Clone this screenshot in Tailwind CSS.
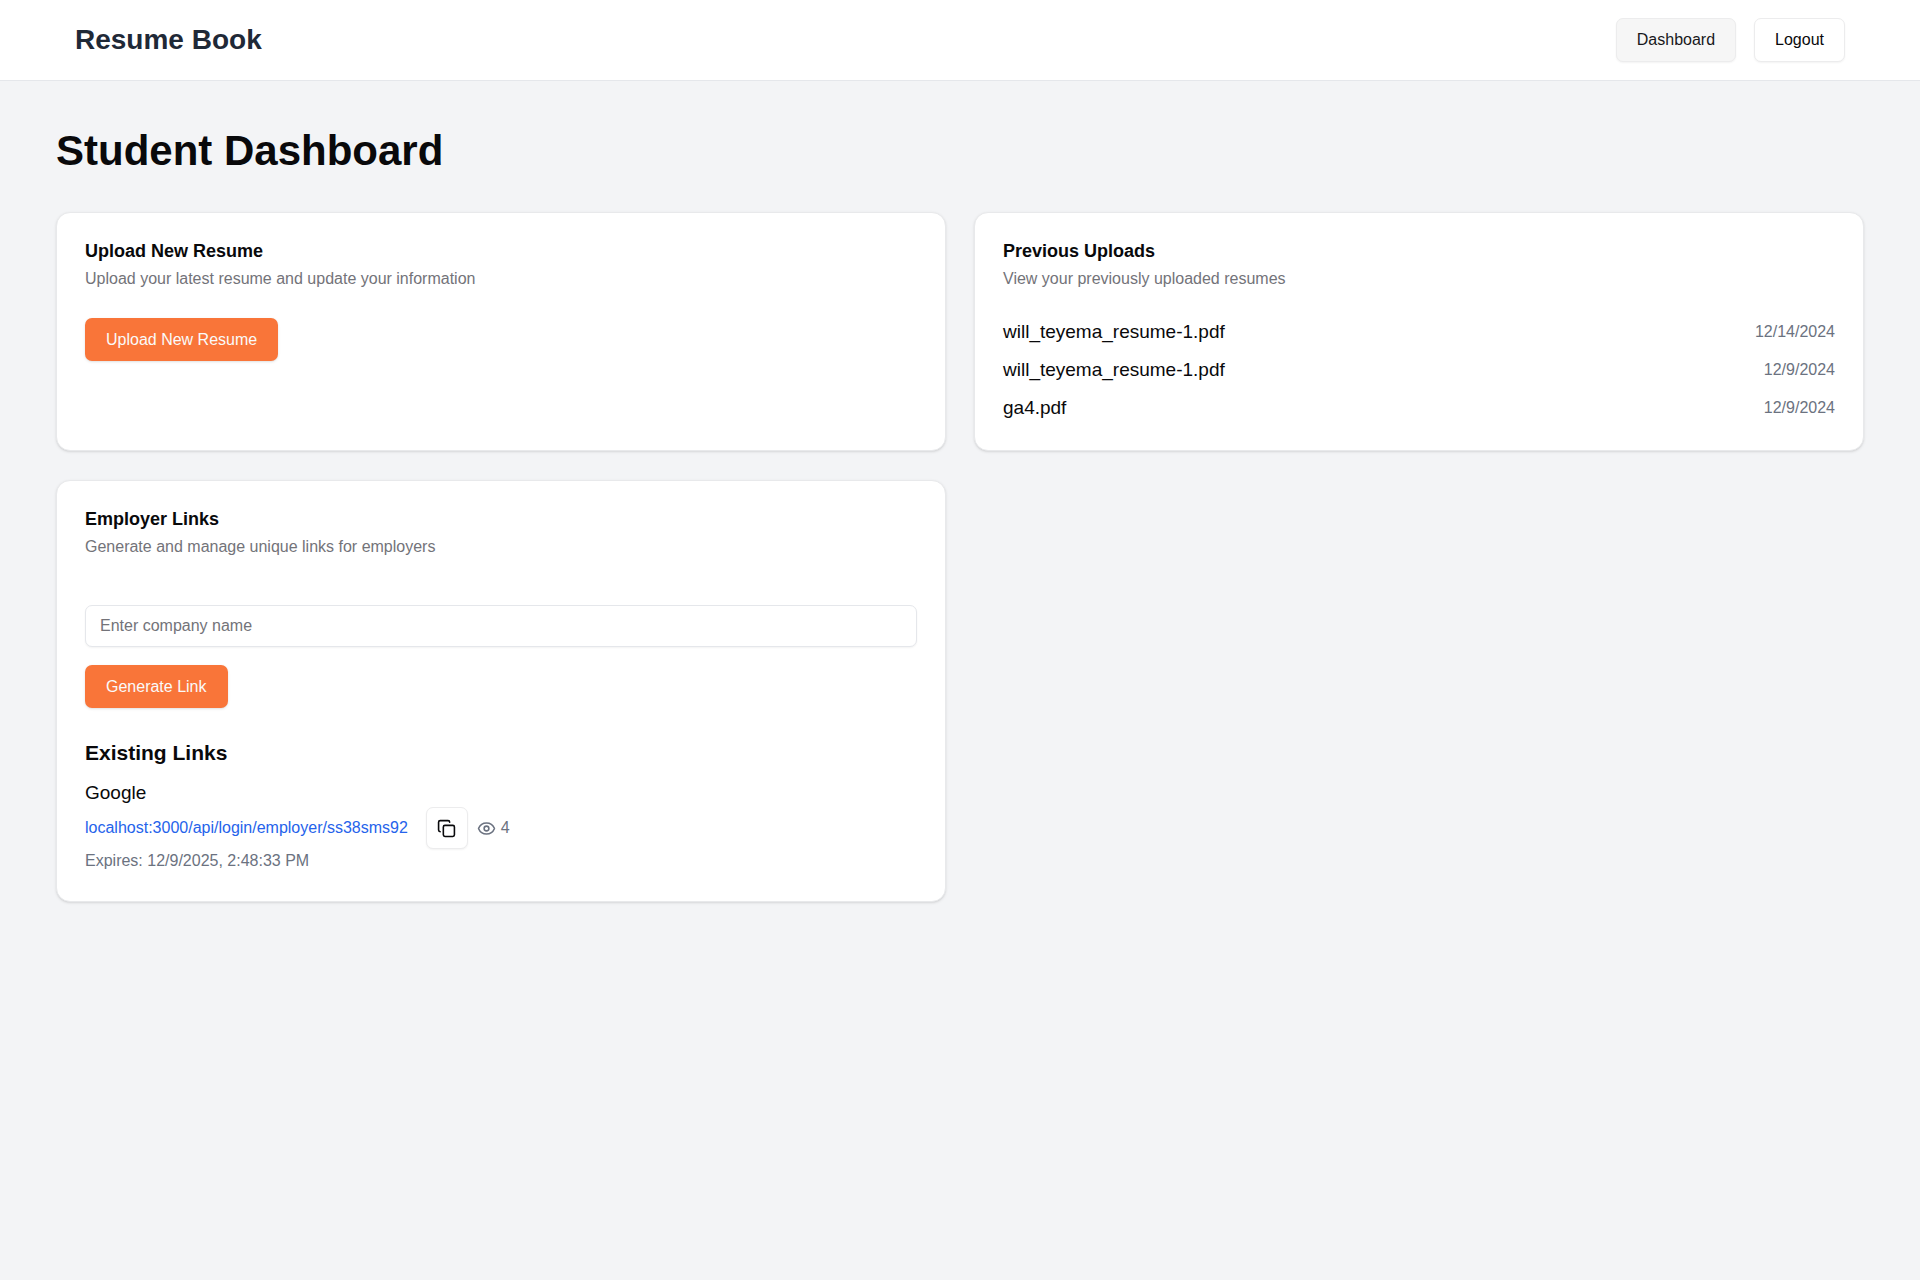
<!DOCTYPE html>
<html lang="en">
<head>
<meta charset="utf-8">
<meta name="viewport" content="width=device-width, initial-scale=1">
<title>Resume Book</title>
<script src="https://cdn.jsdelivr.net/npm/@tailwindcss/browser@4"></script>
</head>
<body class="min-h-screen bg-[#f3f4f6] font-['Liberation_Sans',Arial,sans-serif] text-[19px] leading-[28px] text-[#09090b]">
  <header class="flex items-center justify-between border-b border-[#e5e7eb] bg-white px-[75px] py-[18px]">
    <a href="#" class="text-[28px] leading-[40px] font-bold text-[#1f2937]">Resume Book</a>
    <nav class="flex gap-[18px]">
      <button type="button" class="h-[44px] rounded-[7px] border border-[#ececed] bg-[#f6f6f6] px-[20px] text-[16px] leading-[24px] text-[#18181b] shadow-xs">Dashboard</button>
      <button type="button" class="h-[44px] rounded-[7px] border border-[#ececed] bg-white px-[20px] text-[16px] leading-[24px] shadow-xs">Logout</button>
    </nav>
  </header>

  <main class="px-[56px] pt-[46px] pb-[56px]">
    <h1 class="mb-[37px] text-[42px] leading-[48px] font-bold">Student Dashboard</h1>

    <div class="grid grid-cols-2 gap-x-[28px] gap-y-[29px]">
      <section class="rounded-[14px] border border-[#e8e9eb] bg-white p-[28px] shadow">
        <h2 class="text-[18px] leading-[20px] font-bold">Upload New Resume</h2>
        <p class="mt-[6px] mb-[28px] text-[16px] leading-[23px] text-[#737379]">Upload your latest resume and update your information</p>
        <button type="button" class="h-[43px] rounded-[7px] bg-[#f97539] px-[21px] text-[16px] leading-[24px] text-[#fafafa] shadow-sm">Upload New Resume</button>
      </section>

      <section class="rounded-[14px] border border-[#e8e9eb] bg-white p-[28px] shadow">
        <h2 class="text-[18px] leading-[20px] font-bold">Previous Uploads</h2>
        <p class="mt-[6px] mb-[28px] text-[16px] leading-[23px] text-[#737379]">View your previously uploaded resumes</p>
        <ul class="flex flex-col gap-[10px]">
          <li class="flex items-center justify-between"><span>will_teyema_resume-1.pdf</span><time class="text-[16px] leading-[24px] text-[#6b7280]">12/14/2024</time></li>
          <li class="flex items-center justify-between"><span>will_teyema_resume-1.pdf</span><time class="text-[16px] leading-[24px] text-[#6b7280]">12/9/2024</time></li>
          <li class="flex items-center justify-between"><span>ga4.pdf</span><time class="text-[16px] leading-[24px] text-[#6b7280]">12/9/2024</time></li>
        </ul>
      </section>

      <section class="rounded-[14px] border border-[#e8e9eb] bg-white p-[28px] shadow">
        <h2 class="text-[18px] leading-[20px] font-bold">Employer Links</h2>
        <p class="mt-[6px] mb-[28px] text-[16px] leading-[23px] text-[#737379]">Generate and manage unique links for employers</p>
        <form class="flex flex-col items-start gap-[18px] pt-[19px]">
          <input type="text" aria-label="Company name" placeholder="Enter company name" class="h-[42px] w-full rounded-[7px] border border-[#e5e7eb] bg-white px-[14px] text-[16px] leading-[24px] shadow-xs placeholder:text-[#737379]">
          <button type="button" class="h-[43px] rounded-[7px] bg-[#f97539] px-[21px] text-[16px] leading-[24px] text-[#fafafa] shadow-sm">Generate Link</button>
        </form>
        <h3 class="mt-[28px] mb-[10px] text-[21px] leading-[33px] font-bold">Existing Links</h3>
        <p>Google</p>
        <div class="flex items-center gap-[18px]">
          <a href="#" class="text-[16px] leading-[24px] text-[#2563eb]">localhost:3000/api/login/employer/ss38sms92</a>
          <div class="flex items-center gap-[9px]">
            <button type="button" aria-label="Copy link" class="flex size-[42px] items-center justify-center rounded-[7px] border border-[#ececed] bg-white shadow-xs">
              <svg class="size-[19px]" viewBox="0 0 24 24" fill="none" stroke="currentColor" stroke-width="2" stroke-linecap="round" stroke-linejoin="round"><rect width="14" height="14" x="8" y="8" rx="2" ry="2"/><path d="M4 16c-1.1 0-2-.9-2-2V4c0-1.1.9-2 2-2h10c1.1 0 2 .9 2 2"/></svg>
            </button>
            <span class="flex items-center gap-[5px] text-[16px] leading-[24px] text-[#6b7280]">
              <svg class="size-[19px]" viewBox="0 0 24 24" fill="none" stroke="currentColor" stroke-width="2" stroke-linecap="round" stroke-linejoin="round"><path d="M2.062 12.348a1 1 0 0 1 0-.696 10.750 10.750 0 0 1 19.876 0 1 1 0 0 1 0 .696 10.750 10.750 0 0 1-19.876 0"/><circle cx="12" cy="12" r="3"/></svg>
              4
            </span>
          </div>
        </div>
        <p class="text-[16px] leading-[24px] text-[#6b7280]">Expires: 12/9/2025, 2:48:33 PM</p>
      </section>
    </div>
  </main>
</body>
</html>
